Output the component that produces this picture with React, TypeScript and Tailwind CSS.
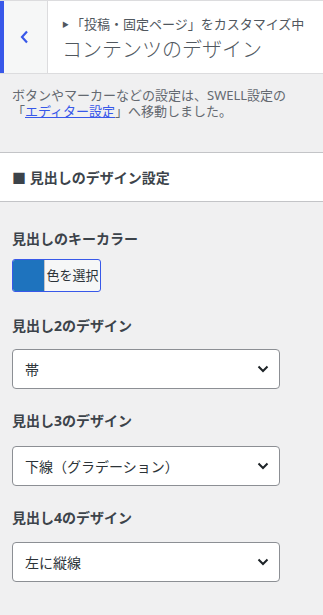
import React from "react";

const font = { fontFamily: '"Noto Sans", "Noto Sans CJK JP", sans-serif' };

function Chevron() {
  return (
    <svg width="12" height="8" viewBox="0 0 12 8" className="shrink-0">
      <path d="M1.5 1.5 L6 6 L10.5 1.5" fill="none" stroke="#1d2327" strokeWidth="2" />
    </svg>
  );
}

function SelectBox({ value }: { value: string }) {
  return (
    <div className="mx-3 h-10 w-[268px] flex items-center justify-between rounded-[4px] border border-[#8c8f94] bg-white pl-3 pr-[10px] text-[14px] text-[#2c3338]">
      <span>{value}</span>
      <Chevron />
    </div>
  );
}

export default function App() {
  return (
    <div className="w-[323px] h-[615px] bg-[#f0f0f1] overflow-hidden" style={font}>
      {/* header */}
      <div className="flex h-[74px] border-t border-b border-[#dcdcde] bg-white">
        <div className="flex w-[48px] items-center justify-center border-l-4 border-[#3858e9] border-r border-r-[#dcdcde] bg-[#f6f7f7] pr-[2px]">
          <svg width="9" height="14" viewBox="0 0 9 14">
            <path d="M7 1.5 L2 7 L7 12.5" fill="none" stroke="#3858e9" strokeWidth="2.2" />
          </svg>
        </div>
        <div className="flex flex-col pl-[14px] pt-[14px]">
          <div className="flex items-center text-[13px] leading-[18px] text-[#50575e]">
            <span className="mr-[2px] text-[7px] leading-none text-[#50575e]">▶</span>
            <span>「投稿・固定ページ」をカスタマイズ中</span>
          </div>
          <div className="mt-[3px] text-[20px] leading-[28px] font-light text-[#50575e]">コンテンツのデザイン</div>
        </div>
      </div>

      {/* description */}
      <div className="px-3 pt-[13px] text-[13px] leading-[16px] text-[#646970]">
        <p>ボタンやマーカーなどの設定は、SWELL設定の</p>
        <p>
          「<span className="text-[#3858e9] underline">エディター設定</span>」へ移動しました。
        </p>
      </div>

      {/* section title */}
      <div className="mt-[33px] flex h-[50px] items-center border-t border-b border-[#c3c4c7] bg-white px-3 text-[14px] font-bold text-[#3c434a]">
        ■ 見出しのデザイン設定
      </div>

      {/* key color */}
      <div className="px-3 pt-[27px] text-[14px] leading-[20px] font-bold text-[#3c434a]">見出しのキーカラー</div>
      <div className="mx-3 mt-[10px] flex h-[33px] w-[89px] overflow-hidden rounded-[3px] border border-[#3858e9] bg-[#f6f7f7]">
        <div className="w-[31px] bg-[#1e73be]" />
        <div className="flex flex-1 items-center justify-center border-l border-[#c3c4c7] text-[13px] text-[#2c3338]">色を選択</div>
      </div>

      <div className="px-3 pt-[24px] text-[14px] leading-[20px] font-bold text-[#3c434a]">見出し2のデザイン</div>
      <div className="mt-[13px]"><SelectBox value="帯" /></div>

      <div className="px-3 pt-[22px] text-[14px] leading-[20px] font-bold text-[#3c434a]">見出し3のデザイン</div>
      <div className="mt-[15px]"><SelectBox value="下線（グラデーション）" /></div>

      <div className="px-3 pt-[22px] text-[14px] leading-[20px] font-bold text-[#3c434a]">見出し4のデザイン</div>
      <div className="mt-[14px]"><SelectBox value="左に縦線" /></div>
    </div>
  );
}
